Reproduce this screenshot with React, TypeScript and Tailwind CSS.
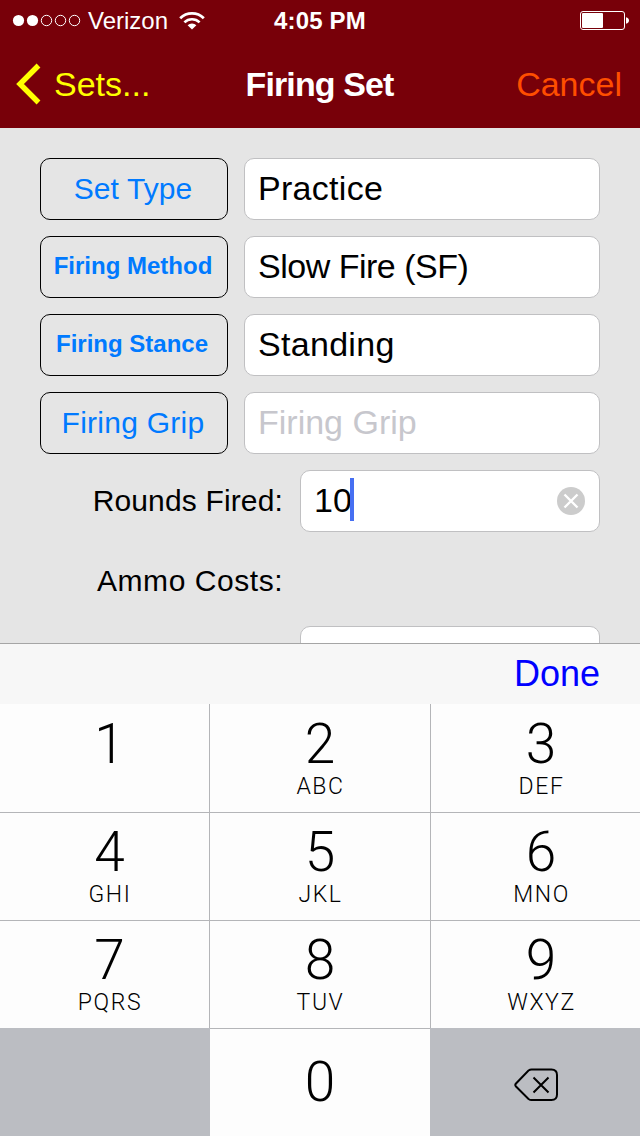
import { clsx } from "clsx";

/* ============================================
   Types
   ============================================ */

interface FormRow {
  label: string;
  labelClass: string;
  value: string;
  valueClass: string;
}

interface Key {
  digit: string;
  letters: string;
}

/* ============================================
   Data
   ============================================ */

const ROWS: FormRow[] = [
  { label: "Set Type", labelClass: "text-[30px] tracking-[0.1px] pb-px pr-0.5", value: "Practice", valueClass: "tracking-[0.3px]" },
  { label: "Firing Method", labelClass: "text-2xl font-bold pb-0.5 pr-0.5", value: "Slow Fire (SF)", valueClass: "tracking-[-0.5px]" },
  { label: "Firing Stance", labelClass: "text-2xl font-bold pb-0.5 pr-1", value: "Standing", valueClass: "tracking-[0.3px]" },
  { label: "Firing Grip", labelClass: "text-[30px] tracking-[0.25px] pb-0.5 pr-0.5", value: "", valueClass: "" },
];

const KEYS: Key[][] = [
  [{ digit: "1", letters: "" }, { digit: "2", letters: "ABC" }, { digit: "3", letters: "DEF" }],
  [{ digit: "4", letters: "GHI" }, { digit: "5", letters: "JKL" }, { digit: "6", letters: "MNO" }],
  [{ digit: "7", letters: "PQRS" }, { digit: "8", letters: "TUV" }, { digit: "9", letters: "WXYZ" }],
];

/* ============================================
   Header
   ============================================ */

function StatusBar() {
  return (
    <div className="grid h-10 grid-cols-[1fr_auto_1fr] items-center pl-[12px] pr-[10px] text-2xl leading-[40px] text-white">
      <div className="flex items-center">
        <svg width="70" height="14" viewBox="0 0 70 14" fill="none" stroke="white">
          <circle cx="6.5" cy="7.5" r="5.6" fill="white" stroke="none" />
          <circle cx="20.5" cy="7.5" r="5.6" fill="white" stroke="none" />
          <circle cx="34.5" cy="7.5" r="5.2" />
          <circle cx="48.5" cy="7.5" r="5.2" />
          <circle cx="62.5" cy="7.5" r="5.2" />
        </svg>
        <span className="ml-[6px] pt-0.5 leading-[38px]">Verizon</span>
        <svg className="ml-[11px] mt-0.5" width="26" height="20" viewBox="0 0 26 20" fill="none" stroke="white">
          <path d="M1.2 7.2a16.8 16.8 0 0 1 23.600 0" strokeWidth="2.800" />
          <path d="M5.400 11.400a10.900 10.900 0 0 1 15.200 0" strokeWidth="2.600" />
          <path d="M13 18.600 8.600 14.200a6.300 6.300 0 0 1 8.800 0z" fill="white" stroke="none" />
        </svg>
      </div>
      <span className="pr-0.5 pt-0.5 leading-[38px] font-bold tracking-[0.15px]">4:05 PM</span>
      <svg className="justify-self-end" width="50" height="20" viewBox="0 0 50 20" fill="none">
        <rect x="0.5" y="1.5" width="44" height="18" rx="2.5" stroke="white" />
        <rect x="2" y="3" width="21" height="15" rx="1" fill="white" />
        <path d="M46 7.200c2 .6 3 1.800 3 3.300s-1 2.700-3 3.300z" fill="white" />
      </svg>
    </div>
  );
}

function NavBar() {
  return (
    <div className="grid h-[88px] grid-cols-[1fr_auto_1fr] items-center pl-[16px] pr-[18px] text-[34px] leading-[88px]">
      <div className="flex items-center text-[#ffff00]">
        <svg width="26" height="42" viewBox="0 0 26 42" fill="none">
          <path d="M22.500 2.500 4 21 22.500 39.500" stroke="currentColor" strokeWidth="5.400" />
        </svg>
        <span className="ml-[12px]">Sets...</span>
      </div>
      <span className="pl-px font-bold tracking-[-0.9px] text-white">Firing Set</span>
      <span className="justify-self-end text-[#ff4e00]">Cancel</span>
    </div>
  );
}

/* ============================================
   Form
   ============================================ */

const FIELD = "h-[62px] rounded-[10px] border border-[#c0c0c2] bg-white text-[34px] leading-[58px]";

function Form() {
  return (
    <div className="flex h-[515px] flex-col gap-4 overflow-hidden px-10 pt-[30px]">
      {ROWS.map((row) => (
        <div key={row.label} className="flex shrink-0 gap-4">
          <button className={clsx("flex h-[62px] w-[188px] items-center justify-center rounded-[10px] border border-black whitespace-nowrap text-[#007aff]", row.labelClass)}>
            {row.label}
          </button>
          <div className={clsx(FIELD, "flex-1 pl-[13px]", row.value ? row.valueClass : "text-[#c7c7cd]")}>{row.value || row.label}</div>
        </div>
      ))}
      <div className="flex shrink-0 items-center justify-end">
        <span className="mr-[17px] pb-0.5 text-[30px] tracking-[0.15px]">Rounds Fired:</span>
        <div className={clsx(FIELD, "flex w-[300px] items-center justify-between pl-[13px] pr-[14px]")}>
          <div className="flex items-center pb-[3px]">
            <span className="-mr-[2px] pt-px">10</span>
            <div className="h-[43px] w-1 bg-[#466ff2]" />
          </div>
          <svg width="28" height="28" viewBox="0 0 28 28">
            <circle cx="14" cy="14" r="14" fill="#cccccc" />
            <path d="M7.500 7.500l13 13M20.500 7.500l-13 13" stroke="white" strokeWidth="2.400" />
          </svg>
        </div>
      </div>
      <div className="flex h-[62px] shrink-0 items-center pl-[57px] pt-0.5 text-[30px] tracking-[0.55px]">Ammo Costs:</div>
      <div className="flex shrink-0 justify-end">
        <div className={clsx(FIELD, "w-[300px]")} />
      </div>
    </div>
  );
}

/* ============================================
   Number pad
   ============================================ */

const DIGIT = "font-[Roboto] text-[55px] leading-[64px] font-light";

// outer columns sit 5px off centre, towards the right edge of the screen
const COLUMN_PAD = ["pl-[10px]", "", "pl-[11px]"];

function Keypad() {
  return (
    <div className="grid grid-cols-[210px_221px_209px] grid-rows-[109px_108px_108px_107px] bg-[#fdfdfd]">
      {KEYS.flat().map((key, i) => (
        <div
          key={key.digit}
          className={clsx("flex flex-col items-center border-b border-[#b4b5b8]", i % 3 < 2 && "border-r", i < 3 ? "pt-[8px]" : "pt-[7px]", COLUMN_PAD[i % 3])}
        >
          <span className={DIGIT}>{key.digit}</span>
          <span className="pl-px font-[Roboto] text-[23px] leading-[22px] font-light tracking-[1.600px]">{key.letters}</span>
        </div>
      ))}
      <div className="-mt-px bg-[#bbbdc2]" />
      <div className="flex justify-center pt-[21px] pr-px">
        <span className={DIGIT}>0</span>
      </div>
      <div className="-mt-px -ml-px flex items-center justify-center bg-[#bbbdc2] pt-[6px] pl-0.5">
        <svg width="44" height="34" viewBox="0 0 44 34" fill="none" stroke="black" strokeWidth="2">
          <path d="M14.500 2.500Q16 1.500 17.500 1.500H37.500Q43 1.500 43 7V26.500Q43 32 37.500 32H17.500Q16 32 14.500 31L2 18.500Q.6 17 2 15.500Z" />
          <path d="M19.500 9.500l15 15M34.500 9.500l-15 15" />
        </svg>
      </div>
    </div>
  );
}

export default function App() {
  return (
    <div className="h-[1136px] w-[640px] overflow-hidden bg-[#e5e5e5] font-['Liberation_Sans',Arial,sans-serif] text-black">
      <header className="bg-[#780009]">
        <StatusBar />
        <NavBar />
      </header>
      <Form />
      <div className="flex h-[61px] items-center justify-end border-t border-[#a5a5a5] bg-[#f7f7f7] pr-10 text-4xl text-[#0000ff]">Done</div>
      <Keypad />
    </div>
  );
}
